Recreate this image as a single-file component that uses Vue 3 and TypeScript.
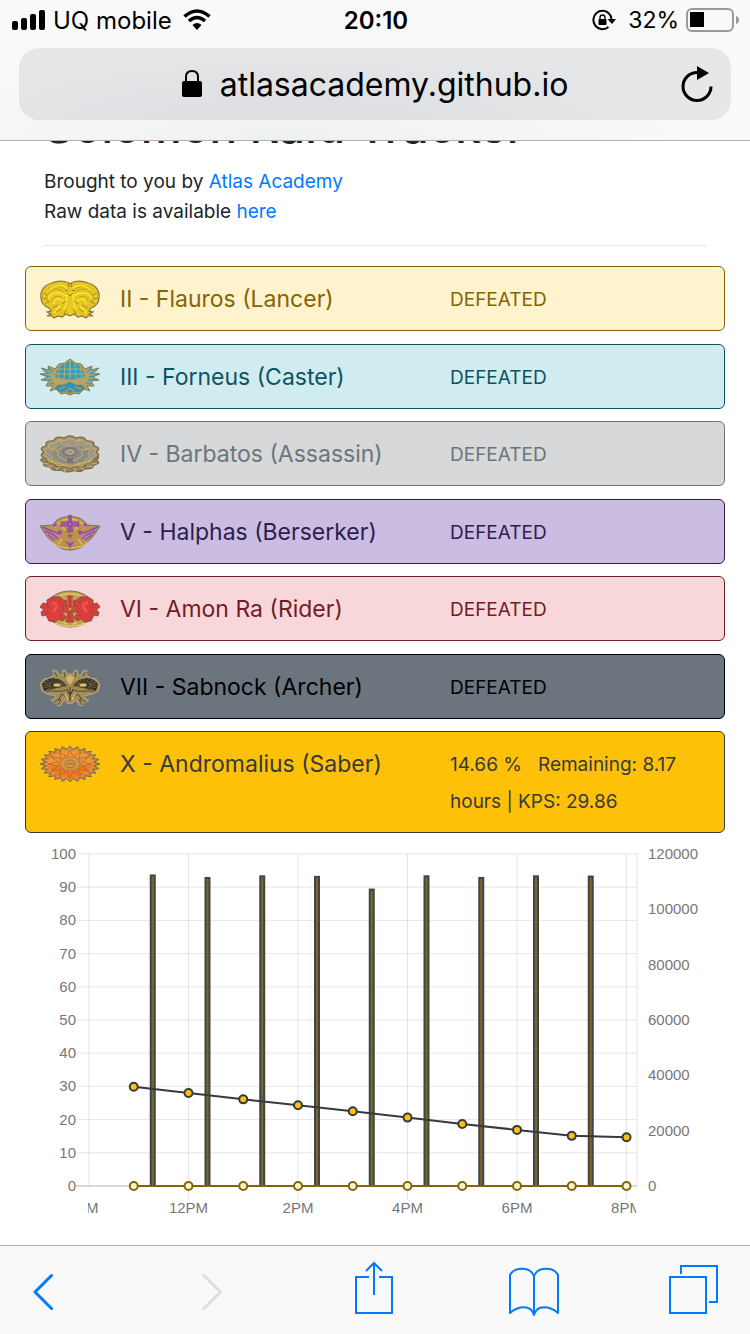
<script setup lang="ts">
interface Layer {
  d: string
  fill?: string
  stroke?: string
  width?: number
  mirror?: boolean
}
interface Raid {
  id: string
  name: string
  tone: string
  status: string
  emblem: Layer[]
}

const point = (cx: number, cy: number, rx: number, ry: number, angle: number): string =>
  `${(cx + rx * Math.cos(angle)).toFixed(2)} ${(cy + ry * Math.sin(angle)).toFixed(2)}`

/* Closed star outline with `n` tips */
function star(cx: number, cy: number, rx: number, ry: number, n: number, inner: number): string {
  const pts: string[] = []
  for (let i = 0; i < n * 2; i++) {
    const k = i % 2 ? inner : 1
    pts.push(point(cx, cy, rx * k, ry * k, (Math.PI * i) / n - Math.PI / 2))
  }
  return `M${pts.join('L')}Z`
}

/* Closed outline made of `n` rounded petals */
function petals(cx: number, cy: number, rx: number, ry: number, n: number): string {
  let d = `M${point(cx, cy, rx * 0.9, ry * 0.9, 0)}`
  for (let i = 0; i < n; i++) {
    const a = (2 * Math.PI * (i + 0.5)) / n
    const b = (2 * Math.PI * (i + 1)) / n
    d += `Q${point(cx, cy, rx * 1.15, ry * 1.15, a)} ${point(cx, cy, rx * 0.9, ry * 0.9, b)}`
  }
  return `${d}Z`
}

/* Spokes between two ellipses */
function rays(cx: number, cy: number, rx: number, ry: number, n: number, inner: number): string {
  let d = ''
  for (let i = 0; i < n; i++) {
    const a = (2 * Math.PI * i) / n
    d += `M${point(cx, cy, rx * inner, ry * inner, a)}L${point(cx, cy, rx, ry, a)}`
  }
  return d
}

const oval = (cx: number, cy: number, rx: number, ry: number): string =>
  `M${cx - rx} ${cy}a${rx} ${ry} 0 1 0 ${rx * 2} 0a${rx} ${ry} 0 1 0 ${-rx * 2} 0Z`

const flauros: Layer[] = [
  { d: 'M30 3C27 0 19-1 12 2C4 4 0 10 1 17C1 22 4 25 9 27L11 30L7 31L11 33L7 35L12 35L14 37L18 35L22 36L26 33L30 35', fill: '#e6c623', stroke: '#85734a', width: 1.2, mirror: true },
  { d: 'M24 11C19 7 13 7 10 11C6 14 6 19 9 22M22 17C18 14 13 15 12 20M25 8C20 5 14 4 8 8', stroke: '#c29a22', width: 0.9, mirror: true },
  { d: 'M27 7C21 3 15 4 9 9M26 15C19 9 10 12 8 18M23 20C18 16 14 18 14 23M20 25L14 32M28 11C26 17 27 23 24 30', stroke: '#f7e62d', width: 1.6, mirror: true },
  { d: 'M3 12L7 14M2 17L7 18M5 23L10 20M12 27L18 24M16 31L21 28M24 33L26 28M22 23L26 20', stroke: '#a98732', width: 1, mirror: true },
  { d: 'M28 18C29 24 28 29 30 34', fill: '#fbe92f', stroke: '#e9cd26', width: 1, mirror: true },
  { d: 'M28 3L29 6M27 12L30 15M25 9L28 10', stroke: '#a06f16', width: 1, mirror: true },
]

const forneus: Layer[] = [
  { d: 'M30 0L25 4L19 5L15 10L8 7L9 11L1 9L8 14L0 15L8 18L1 21L9 22L6 27L13 27L10 32L16 30L21 35L25 34L30 36', fill: '#b5a267', stroke: '#80784f', width: 1, mirror: true },
  { d: 'M15 18L18 8L24 5L30 2V21', fill: '#2a9fc9', stroke: '#a8934b', width: 0.8, mirror: true },
  { d: 'M30 23L24 26L18 26L15 29L21 33L26 32L30 34', fill: '#2f93b9', stroke: '#83824f', width: 0.8, mirror: true },
  { d: 'M9 9L13 13M3 11L11 15M3 16L11 18M4 21L12 21M9 25L14 24', stroke: '#3f9fbe', width: 1.6, mirror: true },
  { d: 'M17 10H30M16 15H30M25 4L24 20M20 6L18 19M15 20L22 25L30 22M19 30L25 28M10 14L17 25', stroke: '#c2a953', width: 1, mirror: true },
  { d: 'M30 1V20M26 32L30 29L34 32', stroke: '#c9ad5b', width: 1 },
]

const barbatos: Layer[] = [
  { d: petals(30, 24, 29, 12, 13), fill: '#93866a', stroke: '#7c6840', width: 1.1 },
  { d: petals(30, 16, 29, 16, 14), fill: '#9b9688', stroke: '#80683a', width: 1.2 },
  { d: petals(30, 17, 26, 14, 14), stroke: '#cfb35e', width: 1 },
  { d: petals(30, 18, 20, 11, 11), fill: '#8e8b84', stroke: '#bfa763', width: 0.9 },
  { d: petals(30, 17, 13, 8, 8), stroke: '#cdb366', width: 1 },
  { d: oval(30, 16, 7, 4), fill: '#8c8c8c', stroke: '#79705a', width: 1 },
  { d: oval(30, 16, 3, 2), stroke: '#d9c074', width: 1 },
  { d: 'M27 22H33V27H27Z', fill: '#777' },
  { d: 'M3 27L9 28M7 31L13 30M16 34L19 31M24 36L26 32M20 3L22 7M19 27L26 30M10 24L17 28M10 12L17 14', stroke: '#d2b256', width: 1.2, mirror: true },
]

const halphas: Layer[] = [
  { d: 'M30 1L26 3C20 3 15 7 13 11L0 12C4 18 7 24 13 28C18 34 24 36 30 36', fill: '#b9944c', stroke: '#777155', width: 1, mirror: true },
  { d: 'M28 5C20 6 17 10 15 14M12 28C16 32 23 34 29 34M22 25L18 30M19 8L24 10M22 13L25 16', stroke: '#dabb60', width: 1.5, mirror: true },
  { d: 'M1 13L10 15L15 18L21 20L17 27L12 26Z', fill: '#b48b93', mirror: true },
  { d: 'M2 13L14 18L21 20M5 17L14 21L18 25M8 21L15 26', stroke: '#9a48a8', width: 1.4, mirror: true },
  { d: 'M28 2H30V18H27L28 12H24L21 13V7L24 8H28', fill: '#a553ac', stroke: '#815485', width: 0.6, mirror: true },
  { d: star(15, 11, 3, 3, 5, 0.45), fill: '#a345b5', mirror: true },
  { d: star(20, 18, 3, 3, 5, 0.45), fill: '#a345b5', mirror: true },
  { d: star(30, 22, 3, 3, 5, 0.45), fill: '#a345b5' },
  { d: 'M25 27L30 29L35 27L32 31L30 34L28 31Z', fill: '#a345b5' },
  { d: oval(30, 10, 2, 2), fill: '#c06ad1', stroke: '#7c437e', width: 0.8 },
]

const amon: Layer[] = [
  { d: oval(30, 18, 24, 18), fill: '#c5a04d', stroke: '#75715a', width: 1 },
  { d: 'M19 5C24 2 27 3 30 3M15 32C20 35 25 35 30 35M23 31L27 33', stroke: '#dfc76d', width: 1.5, mirror: true },
  { d: 'M27 10L23 9L20 6L12 6L7 9V13L3 12L0 16L4 19L1 21L2 25L6 24L9 30L15 31L19 28L23 30L26 26L22 22L26 17Z', fill: '#dc3d3c', stroke: '#77513e', width: 0.9, mirror: true },
  { d: 'M27 5H30V31H26L28 21H23V15H28', fill: '#df4341', stroke: '#8b4638', width: 0.8, mirror: true },
  { d: 'M7 14L9 17M6 23L8 20M19 10L22 12M19 25L21 24', stroke: '#90402f', width: 1, mirror: true },
  { d: 'M12 12C18 12 18 16 13 21', stroke: '#ec5850', width: 2.5, mirror: true },
  { d: star(30, 18, 3, 3, 8, 0.5), fill: '#dca345', stroke: '#8c4b33', width: 0.6 },
]

const sabnock: Layer[] = [
  { d: 'M30 5L27 5L25 1L22 2L23 6L19 6L17 2L13 1L14 6L9 9L4 10L0 15L2 22L7 25L16 27L14 30L11 31L15 34L18 32L17 37L21 36L24 31L27 34L30 35', fill: '#a48f58', stroke: '#b3a681', width: 1, mirror: true },
  { d: 'M2 15C8 6 22 8 27 17L17 19L4 22Z', fill: '#332e28', mirror: true },
  { d: rays(16, 16, 13, 7, 16, 0.4), stroke: '#8d7846', width: 0.7, mirror: true },
  { d: oval(17, 16, 4, 2), fill: '#d6bd6e', stroke: '#5e5136', width: 0.6, mirror: true },
  { d: 'M6 23C13 20 21 25 28 20M18 31L22 25L26 28M14 3L17 7M24 3L25 8M14 33L20 30M18 36L21 30', stroke: '#544a34', width: 1, mirror: true },
  { d: 'M27 21L30 26L33 21M30 18V32', stroke: '#493d29', width: 1.2 },
  { d: 'M26 8L30 6V16L27 12', fill: '#cdb56b', mirror: true },
  { d: 'M25 25L28 31', stroke: '#dcc478', width: 1.2, mirror: true },
]

const andromalius: Layer[] = [
  { d: star(30, 18, 30, 18, 24, 0.82), fill: '#cb9b55', stroke: '#77664d', width: 1 },
  { d: star(30, 18, 27, 16, 24, 0.82), fill: '#f79436', stroke: '#b06c31', width: 0.5 },
  { d: 'M7 20L30 18L53 20L44 28L30 33L16 28Z', fill: '#f6781f' },
  { d: star(30, 18, 22, 14, 12, 0.55), stroke: '#a06c36', width: 0.8 },
  { d: star(30, 18, 12, 8, 12, 0.75), fill: '#dd9440', stroke: '#a57638', width: 0.8 },
  { d: oval(30, 18, 5, 4), fill: '#cf9445', stroke: '#94682f', width: 0.8 },
  { d: 'M27 19Q30 15 33 19', stroke: '#7b562e', width: 0.8 },
]

const raids: Raid[] = [
  { id: 'II', name: 'Flauros (Lancer)', tone: 'yellow', status: 'DEFEATED', emblem: flauros },
  { id: 'III', name: 'Forneus (Caster)', tone: 'cyan', status: 'DEFEATED', emblem: forneus },
  { id: 'IV', name: 'Barbatos (Assassin)', tone: 'silver', status: 'DEFEATED', emblem: barbatos },
  { id: 'V', name: 'Halphas (Berserker)', tone: 'purple', status: 'DEFEATED', emblem: halphas },
  { id: 'VI', name: 'Amon Ra (Rider)', tone: 'red', status: 'DEFEATED', emblem: amon },
  { id: 'VII', name: 'Sabnock (Archer)', tone: 'slate', status: 'DEFEATED', emblem: sabnock },
  { id: 'X', name: 'Andromalius (Saber)', tone: 'amber', status: '14.66 %\u00a0\u00a0 Remaining: 8.17 hours | KPS: 29.86', emblem: andromalius },
]

/* Chart geometry */
const TOP = 21
const BOTTOM = 353
const percentY = (v: number): number => BOTTOM - ((BOTTOM - TOP) * v) / 100
const killsY = (v: number): number => BOTTOM - ((BOTTOM - TOP) * v) / 120000
const hourX = (h: number): number => 188.5 + (h - 12) * 54.75

const percentTicks = [0, 10, 20, 30, 40, 50, 60, 70, 80, 90, 100]
const killTicks = [0, 20000, 40000, 60000, 80000, 100000, 120000]
const hourTicks = [
  { h: 10, label: '10AM' },
  { h: 12, label: '12PM' },
  { h: 14, label: '2PM' },
  { h: 16, label: '4PM' },
  { h: 18, label: '6PM' },
  { h: 20, label: '8PM' },
]
const hp = [29.9, 28, 26.1, 24.3, 22.5, 20.6, 18.7, 16.9, 15.1, 14.7]
const kills = [112600, 111700, 112300, 112100, 107500, 112300, 111700, 112300, 112200]
const hpPoints = hp.map((v, i) => ({ x: hourX(11 + i), y: percentY(v) }))
const hpLine = hpPoints.map((p) => `${p.x},${p.y}`).join(' ')
</script>

<template>
  <div class="screen">
    <header class="browser">
      <div class="status">
        <div class="carrier">
          <svg width="34" height="22" viewBox="0 0 34 22" aria-hidden="true">
            <rect x="0" y="12" width="6" height="9" rx="2" />
            <rect x="9" y="9" width="6" height="12" rx="2" />
            <rect x="18" y="5" width="6" height="16" rx="2" />
            <rect x="27" y="1" width="6" height="20" rx="2" />
          </svg>
          <span>UQ mobile</span>
          <svg class="wifi" width="28" height="22" viewBox="0 0 28 22" aria-hidden="true">
            <path d="M1.5 7.5Q14-3.5 26.5 7.5M6 12Q14 5 22 12" fill="none" stroke="#000" stroke-width="3.6" />
            <path d="M9.5 16Q14 12 18.5 16L14 21Z" />
          </svg>
        </div>
        <time>20:10</time>
        <div class="power">
          <svg width="24" height="22" viewBox="0 0 24 22" aria-hidden="true">
            <path d="M17.5 5A9.2 9.2 0 1 0 16.500 18M14.500 2.800A9.2 9.2 0 0 1 19.500 11" fill="none" stroke="#000" stroke-width="2" />
            <path d="M15.500 10H24L20 15Z" />
            <rect x="6.500" y="10" width="8" height="6" rx="1" />
            <path d="M8 11V8.500Q8 6 10.500 6T13 8.500V11" fill="none" stroke="#000" stroke-width="1.300" />
          </svg>
          <span>32%</span>
          <svg width="54" height="24" viewBox="0 0 54 24" aria-hidden="true">
            <rect x="1" y="1" width="46" height="22" rx="5" fill="none" stroke="#999" stroke-width="2" />
            <rect x="4" y="4" width="14" height="15" />
            <path d="M50 8Q53 9 53 12T50 16Z" fill="#999" />
          </svg>
        </div>
      </div>
      <div class="address">
        <button class="host" type="button">
          <svg width="20" height="28" viewBox="0 0 20 28" aria-hidden="true">
            <rect y="11" width="20" height="16" rx="2" />
            <path d="M4 12V7Q4 1 10 1T16 7V12" fill="none" stroke="#000" stroke-width="2" />
          </svg>
          <span>atlasacademy.github.io</span>
        </button>
        <button class="reload" type="button" aria-label="Reload">
          <svg width="32" height="36" viewBox="0 0 32 36" aria-hidden="true">
            <path d="M16 6.500A14 14 0 1 0 30 20.500" fill="none" stroke="#000" stroke-width="3" />
            <path d="M16 0L28 7L16 14Z" />
          </svg>
        </button>
      </div>
    </header>

    <main>
      <section class="intro">
        <div class="heading"><h1>Solomon Raid Tracker</h1></div>
        <p>Brought to you by <a href="#atlas">Atlas Academy</a><br />Raw data is available <a href="#raw">here</a></p>
        <hr />
      </section>

      <ul class="raids">
        <li v-for="raid in raids" :key="raid.id" :class="raid.tone">
          <svg class="emblem" width="62" height="39" viewBox="-1 -1 62 39" aria-hidden="true">
            <template v-for="(layer, i) in raid.emblem" :key="i">
              <path :d="layer.d" :fill="layer.fill ?? 'none'" :stroke="layer.stroke ?? 'none'" :stroke-width="layer.width" />
              <path v-if="layer.mirror" :d="layer.d" transform="translate(60 0) scale(-1 1)" :fill="layer.fill ?? 'none'" :stroke="layer.stroke ?? 'none'" :stroke-width="layer.width" />
            </template>
          </svg>
          <h2>{{ raid.id }} - {{ raid.name }}</h2>
          <span class="state">{{ raid.status }}</span>
        </li>
      </ul>

      <svg class="chart" viewBox="0 0 750 400" role="img" aria-label="Remaining health and kills per hour">
        <defs>
          <clipPath id="plot"><rect x="88" y="0" width="548" height="400" /></clipPath>
        </defs>
        <g class="grid">
          <path v-for="v in percentTicks" :key="v" :class="{ zero: v === 0 }" :d="`M76 ${percentY(v)}H637`" />
          <path :d="`M89 ${TOP}V${BOTTOM}M637 ${TOP}V${BOTTOM}`" />
          <path v-for="t in hourTicks.slice(1)" :key="t.h" :d="`M${hourX(t.h)} ${TOP}V366`" />
        </g>
        <g class="labels">
          <text v-for="v in percentTicks" :key="v" x="76" :y="percentY(v) + 5" text-anchor="end">{{ v }}</text>
          <text v-for="v in killTicks" :key="v" x="648" :y="killsY(v) + 5">{{ v }}</text>
          <g clip-path="url(#plot)">
            <text v-for="t in hourTicks" :key="t.h" :x="hourX(t.h)" y="380" text-anchor="middle">{{ t.label }}</text>
          </g>
        </g>
        <g class="bars">
          <g v-for="(k, i) in kills" :key="i">
            <rect class="shell" :x="hourX(11 + i) + 16" :y="killsY(k)" width="6" :height="BOTTOM - killsY(k)" />
            <rect class="core" :x="hourX(11 + i) + 18" :y="killsY(k) + 2" width="2" :height="BOTTOM - killsY(k) - 2" />
          </g>
        </g>
        <polyline class="hp" :points="hpLine" />
        <circle v-for="(p, i) in hpPoints" :key="i" class="hp-dot" :cx="p.x" :cy="p.y" r="4" />
        <path class="base" :d="`M${hourX(11)} ${BOTTOM}H${hourX(20)}`" />
        <circle v-for="(p, i) in hpPoints" :key="i" class="base-dot" :cx="p.x" :cy="BOTTOM" r="4" />
      </svg>
    </main>

    <nav class="toolbar" aria-label="Browser">
      <button type="button" aria-label="Back">
        <svg class="chevron" width="20" height="56" viewBox="0 0 20 56"><path d="M18.500 15.500L2 32L18.500 48.500" /></svg>
      </button>
      <button type="button" aria-label="Forward" disabled>
        <svg class="chevron" width="20" height="56" viewBox="0 0 20 56"><path d="M2 15.500L18.500 32L2 48.500" /></svg>
      </button>
      <button type="button" aria-label="Share">
        <svg width="38" height="56" viewBox="0 0 38 56"><path d="M14 17H1V53H37V17H24M19 3V35M11 11L19 3L27 11" /></svg>
      </button>
      <button type="button" aria-label="Bookmarks">
        <svg width="52" height="56" viewBox="0 0 52 56"><path d="M2 53V15C6 7 22 6 26 16C30 6 46 7 50 15V53C42 46 29 44 26 55C23 44 10 46 2 53ZM26 16V54" stroke-linejoin="round" /></svg>
      </button>
      <button type="button" aria-label="Tabs">
        <svg width="50" height="56" viewBox="0 0 50 56"><path d="M1 17H37V53H1ZM12 14V6H48V42H40" /></svg>
      </button>
    </nav>
  </div>
</template>

<style>
body {
  background: #fff;
}
</style>

<style scoped>
.screen {
  box-sizing: border-box;
  min-height: 100vh;
  display: flex;
  flex-direction: column;
  font-family: Inter, "Liberation Sans", sans-serif;
  color: #212529;
}
button {
  padding: 0;
  border: 0;
  background: none;
  font: inherit;
  color: inherit;
}
svg {
  display: block;
  flex: none;
}
.browser {
  box-sizing: border-box;
  padding-bottom: 20px;
  border-bottom: 1px solid #b2b2b2;
  background: radial-gradient(ellipse 55% 75% at 38% 110%, #eeefef, #f9f9f9);
  color: #000;
}
.status {
  display: grid;
  grid-template-columns: 1fr auto 1fr;
  align-items: center;
  height: 40px;
  margin-bottom: 8px;
  padding: 0 10px 0 12px;
  font-size: 24px;
}
.carrier,
.power {
  display: flex;
  align-items: center;
  gap: 7px;
}
.wifi {
  margin-left: 4px;
}
.power {
  justify-content: flex-end;
  font-size: 23px;
}
.power span {
  margin-left: 5px;
}
time {
  font-weight: 600;
}
.address {
  display: grid;
  grid-template-columns: 68px 1fr 68px;
  align-items: center;
  height: 72px;
  margin: 0 19px;
  border-radius: 20px;
  background: radial-gradient(ellipse 60% 130% at 38% 115%, #dcdde0, #e6e7e9);
}
.host {
  grid-column: 2;
  display: flex;
  align-items: center;
  justify-content: center;
  gap: 18px;
  font-size: 32px;
}
.reload {
  display: flex;
  justify-content: center;
}
main {
  flex: 1;
}
.intro {
  padding: 0 44px;
  font-size: 19px;
  line-height: 30px;
}
.heading {
  display: flex;
  align-items: flex-end;
  height: 15px;
  margin-bottom: 11px;
  overflow: hidden;
}
h1 {
  margin: 0;
  font-size: 46px;
  line-height: 60px;
  font-weight: 500;
  white-space: nowrap;
}
p {
  margin: 0 0 18px;
}
a {
  color: #007bff;
  text-decoration: none;
}
hr {
  margin: 0 0 20px;
  border: 0;
  border-top: 1px solid #e5e5e5;
}
.raids {
  margin: 0;
  padding: 0 25px;
  list-style: none;
}
.raids li {
  display: grid;
  grid-template-columns: 81px 330fr 260fr;
  align-items: start;
  margin-bottom: 12px;
  padding: 14px 14px 12px 13px;
  border: 1px solid;
  border-radius: 6px;
  line-height: 37px;
}
.raids li:nth-child(odd) {
  margin-bottom: 13px;
}
.raids li:last-child {
  margin-bottom: 0;
}
.emblem {
  margin: -1px 0;
}
h2 {
  margin: 0;
  font-size: 23px;
  font-weight: 400;
  line-height: inherit;
}
.state {
  font-size: 19px;
}
.yellow { color: #856404; background: #fff3cd; }
.cyan { color: #0c5460; background: #d1ecf1; }
.silver { color: #6c757d; background: #d6d8d9; }
.purple { color: #2f1c4e; background: #cbbde2; }
.red { color: #721c24; background: #f8d7da; }
.slate { color: #000; background: #6c757d; }
.amber { color: #343a40; background: #ffc107; }
.chart {
  width: 100%;
  height: auto;
}
.grid path {
  fill: none;
  stroke: #000;
  stroke-opacity: 0.1;
}
.grid .zero {
  stroke-opacity: 0.3;
}
.labels {
  font-family: "Liberation Sans", Arial, sans-serif;
  font-size: 15px;
  fill: #777;
}
.shell {
  fill: #3f464a;
}
.core {
  fill: #80691f;
}
.hp {
  fill: none;
  stroke: #343a40;
  stroke-width: 2;
}
.hp-dot {
  fill: #ffc107;
  stroke: #343a40;
  stroke-width: 2;
}
.base {
  stroke: #856404;
  stroke-width: 2;
}
.base-dot {
  fill: #fff3cd;
  stroke: #856404;
  stroke-width: 2;
}
.toolbar {
  display: grid;
  grid-template-columns: 169fr 153fr 153fr 161fr 50px;
  justify-items: start;
  padding: 14px 31px 18px 33px;
  border-top: 1px solid #b2b2b2;
  background: #f9f9f9;
}
.toolbar svg {
  fill: none;
  stroke: #007aff;
  stroke-width: 2;
}
.toolbar .chevron {
  stroke-width: 3;
  stroke-linecap: round;
  stroke-linejoin: round;
}
.toolbar button:disabled svg {
  stroke: #ddd;
}
</style>
